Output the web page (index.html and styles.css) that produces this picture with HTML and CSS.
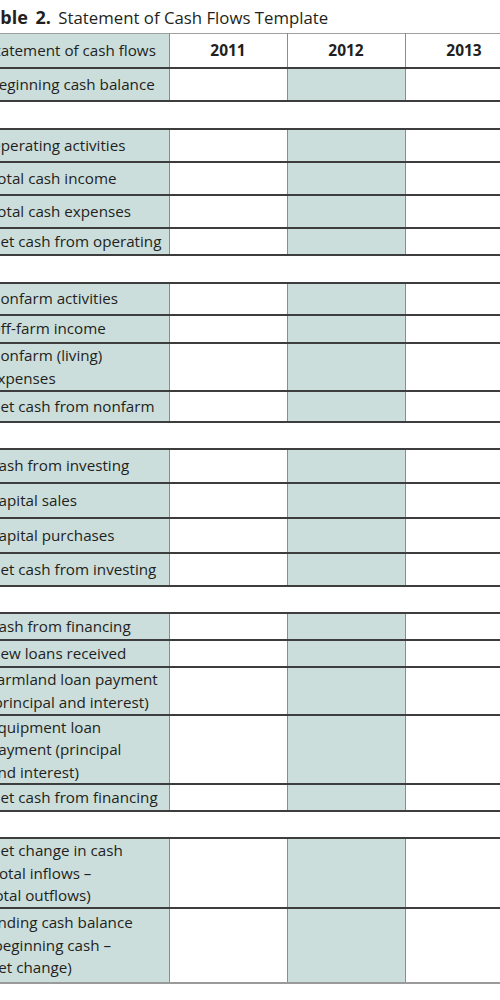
FILE: index.html
```html
<!DOCTYPE html>
<html lang="en">
<head>
<meta charset="utf-8">
<title>Statement of Cash Flows Template</title>
<link rel="stylesheet" href="styles.css">
</head>
<body>
<div class="page">
  <h1 class="caption"><b>Table 2.</b> Statement of Cash Flows Template</h1>
  <table class="cf">
    <colgroup>
      <col class="c-label"><col class="c-year"><col class="c-year"><col class="c-year">
    </colgroup>
    <thead>
      <tr class="h34 head">
        <th class="label">Statement of cash flows</th>
        <th>2011</th><th>2012</th><th>2013</th>
      </tr>
    </thead>
    <tbody>
      <tr class="h33"><td class="label">Beginning cash balance</td><td></td><td class="shade"></td><td></td></tr>
      <tr class="gap h28"><td colspan="4"></td></tr>
      <tr class="h33"><td class="label">Operating activities</td><td></td><td class="shade"></td><td></td></tr>
      <tr class="h33"><td class="label">Total cash income</td><td></td><td class="shade"></td><td></td></tr>
      <tr class="h33"><td class="label">Total cash expenses</td><td></td><td class="shade"></td><td></td></tr>
      <tr class="h27"><td class="label">Net cash from operating</td><td></td><td class="shade"></td><td></td></tr>
      <tr class="gap h28"><td colspan="4"></td></tr>
      <tr class="h32"><td class="label">Nonfarm activities</td><td></td><td class="shade"></td><td></td></tr>
      <tr class="h28"><td class="label">Off-farm income</td><td></td><td class="shade"></td><td></td></tr>
      <tr class="h48"><td class="label">Nonfarm (living)<br>expenses</td><td></td><td class="shade"></td><td></td></tr>
      <tr class="h31"><td class="label">Net cash from nonfarm</td><td></td><td class="shade"></td><td></td></tr>
      <tr class="gap h27"><td colspan="4"></td></tr>
      <tr class="h34"><td class="label">Cash from investing</td><td></td><td class="shade"></td><td></td></tr>
      <tr class="h35"><td class="label">Capital sales</td><td></td><td class="shade"></td><td></td></tr>
      <tr class="h35"><td class="label">Capital purchases</td><td></td><td class="shade"></td><td></td></tr>
      <tr class="h33"><td class="label">Net cash from investing</td><td></td><td class="shade"></td><td></td></tr>
      <tr class="gap h27"><td colspan="4"></td></tr>
      <tr class="h27"><td class="label">Cash from financing</td><td></td><td class="shade"></td><td></td></tr>
      <tr class="h27"><td class="label">New loans received</td><td></td><td class="shade"></td><td></td></tr>
      <tr class="h48"><td class="label">Farmland loan payment<br>(principal and interest)</td><td></td><td class="shade"></td><td></td></tr>
      <tr class="h69"><td class="label">Equipment loan<br>payment (principal<br>and interest)</td><td></td><td class="shade"></td><td></td></tr>
      <tr class="h27"><td class="label">Net cash from financing</td><td></td><td class="shade"></td><td></td></tr>
      <tr class="gap h27"><td colspan="4"></td></tr>
      <tr class="h69"><td class="label">Net change in cash<br>(total inflows –<br>total outflows)</td><td></td><td class="shade"></td><td></td></tr>
      <tr class="h75 last"><td class="label">Ending cash balance<br>(beginning cash –<br>net change)</td><td></td><td class="shade"></td><td></td></tr>
    </tbody>
  </table>
</div>
</body>
</html>
```

FILE: styles.css
```css
html, body {
  margin: 0;
  padding: 0;
  background: #ffffff;
  overflow: hidden;
}

body {
  font-family: "Open Sans", "Noto Sans", sans-serif;
  color: #231f20;
}

.page {
  margin-left: -17px;
  width: 560px;
}

.caption {
  margin: 0 0 0 -4px;
  height: 33px;
  padding-top: 6px;
  box-sizing: border-box;
  font-size: 16.8px;
  font-weight: 400;
  line-height: 22px;
  white-space: nowrap;
}

.caption b {
  font-size: 18px;
  font-weight: 700;
  word-spacing: 3px;
  margin-right: 3px;
}

.cf {
  border-collapse: collapse;
  table-layout: fixed;
  width: 540px;
  font-size: 15.2px;
  line-height: 22.5px;
}

.c-label { width: 186px; }
.c-year { width: 118px; }

.cf th,
.cf td {
  padding: 0 4px 0 6px;
  border-top: 2px solid #3d3d3d;
  border-bottom: 2px solid #3d3d3d;
  border-left: 1px solid #8c8c8c;
  border-right: 1px solid #8c8c8c;
  text-align: left;
  vertical-align: middle;
  white-space: nowrap;
}

.cf .head th {
  border-top: 1px solid #a0a0a0;
  font-size: 15.5px;
  font-weight: 700;
  text-align: center;
  padding: 0 4px;
}

.cf .head th.label {
  text-align: left;
  font-size: 15.2px;
  font-weight: 400;
  padding: 0 4px 0 4px;
}

.cf .label {
  background: #cbdedc;
  border-left: none;
}

.cf .shade {
  background: #cbdedc;
}

.cf .gap td {
  border-left: none;
  border-right: none;
}

.cf .last td {
  border-bottom: 2px solid #9a9a9a;
}

.h27 { height: 27px; }
.h28 { height: 28px; }
.h31 { height: 31px; }
.h32 { height: 32px; }
.h33 { height: 33px; }
.h34 { height: 34px; }
.h35 { height: 35px; }
.h48 { height: 48px; }
.h69 { height: 69px; }
.h75 { height: 75px; }
```
